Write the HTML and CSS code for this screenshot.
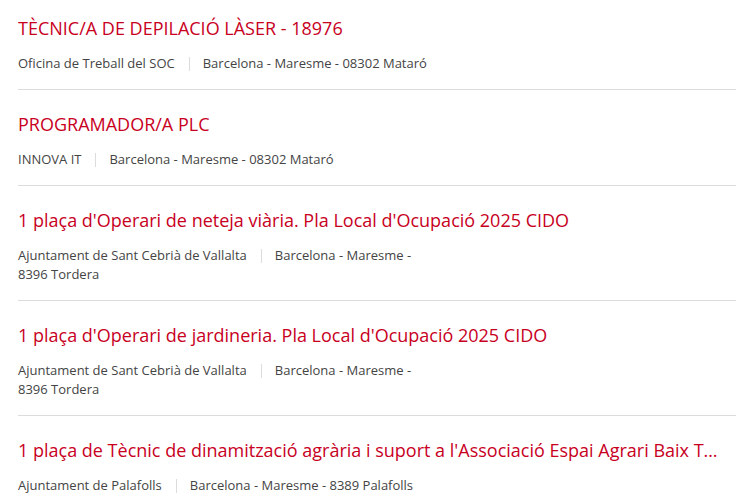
FILE: index.html
```html
<!DOCTYPE html>
<html lang="ca">
<head>
<meta charset="utf-8">
<link rel="stylesheet" href="styles.css">
</head>
<body>
<ul class="offers">
  <li class="offer">
    <a class="offer-title">TÈCNIC/A DE DEPILACIÓ LÀSER - 18976</a>
    <p class="offer-meta"><span class="company">Oficina de Treball del SOC</span><span class="sep"></span><span class="place">Barcelona - Maresme - 08302 Mataró</span></p>
  </li>
  <li class="offer">
    <a class="offer-title">PROGRAMADOR/A PLC</a>
    <p class="offer-meta"><span class="company">INNOVA IT</span><span class="sep"></span><span class="place">Barcelona - Maresme - 08302 Mataró</span></p>
  </li>
  <li class="offer">
    <a class="offer-title">1 plaça d'Operari de neteja viària. Pla Local d'Ocupació 2025 CIDO</a>
    <p class="offer-meta"><span class="company">Ajuntament de Sant Cebrià de Vallalta</span><span class="sep"></span><span class="place">Barcelona - Maresme - 8396 Tordera</span></p>
  </li>
  <li class="offer">
    <a class="offer-title">1 plaça d'Operari de jardineria. Pla Local d'Ocupació 2025 CIDO</a>
    <p class="offer-meta"><span class="company">Ajuntament de Sant Cebrià de Vallalta</span><span class="sep"></span><span class="place">Barcelona - Maresme - 8396 Tordera</span></p>
  </li>
  <li class="offer">
    <a class="offer-title">1 plaça de Tècnic de dinamització agrària i suport a l'Associació Espai Agrari Baix Tordera</a>
    <p class="offer-meta"><span class="company">Ajuntament de Palafolls</span><span class="sep"></span><span class="place">Barcelona - Maresme - 8389 Palafolls</span></p>
  </li>
</ul>
</body>
</html>
```
FILE: styles.css
```css
html, body {
  margin: 0;
  padding: 0;
  background: #fff;
}
body {
  font-family: "Open Sans", "Liberation Sans", sans-serif;
  overflow: hidden;
}
.offers {
  list-style: none;
  margin: 0;
  padding: 0 0 0 18px;
}
.offer {
  padding: 22px 0 16px;
  border-bottom: 1px solid #dcdcdc;
}
.offer:first-child {
  padding-top: 16px;
}
.offer-title {
  display: block;
  margin-right: 18px;
  font-size: 18px;
  line-height: 24px;
  color: #c8001e;
  white-space: nowrap;
  overflow: hidden;
  text-overflow: ellipsis;
  text-decoration: none;
}
.offer-meta {
  margin: 14px 0 0;
  max-width: 410px;
  font-size: 13px;
  line-height: 19px;
  color: #444;
}
.sep {
  display: inline-block;
  width: 1px;
  height: 14px;
  background: #dcdcdc;
  margin: 0 13px 0 14px;
  vertical-align: -3px;
}
```
